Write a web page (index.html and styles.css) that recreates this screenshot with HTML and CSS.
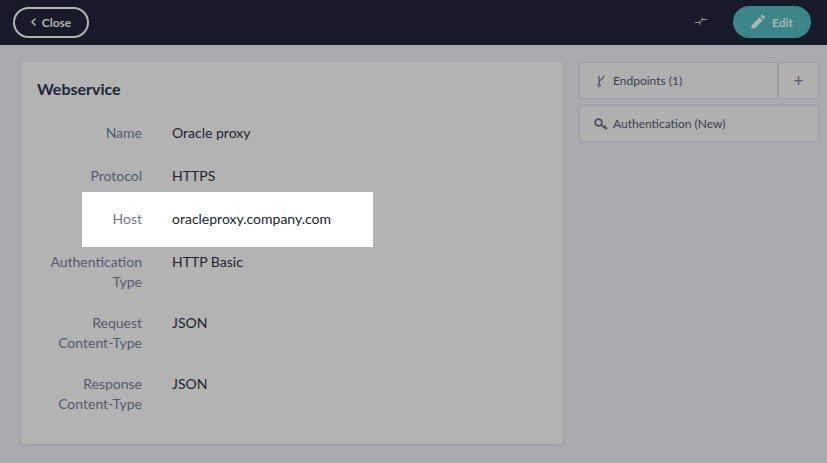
FILE: index.html
```html
<!DOCTYPE html>
<html lang="en">
<head>
  <meta charset="UTF-8" />
  <title>Webservice</title>
  <link rel="stylesheet" href="styles.css">
</head>
<body>
  <header class="topbar">
    <button class="close-btn">
      <svg class="chevron" width="8" height="10" viewBox="0 0 8 10"><path d="M5.5 1.5 2 5l3.5 3.5" fill="none" stroke="currentColor" stroke-width="1.5"/></svg>
      Close
    </button>
    <div class="topbar-right">
      <svg class="compress" width="12" height="8" viewBox="0 0 12 8"><path d="M0 5.5h5M5 3.5v4M7 2.5h5M7 .5v4" fill="none" stroke="currentColor" stroke-width="1.1"/></svg>
      <button class="edit-btn">
        <svg width="14" height="14" viewBox="0 0 14 14"><path d="M0.5 13.5V10.4L8.6 2.3l3.1 3.1-8.1 8.1zM9.6 1.3l1-1a1 1 0 0 1 1.4 0l1.7 1.7a1 1 0 0 1 0 1.4l-1 1z" fill="currentColor"/></svg>
        Edit
      </button>
    </div>
  </header>

  <main class="content">
    <section class="card">
      <h1>Webservice</h1>
      <div class="rows">
        <div class="row"><div class="label">Name</div><div class="value">Oracle proxy</div></div>
        <div class="row"><div class="label">Protocol</div><div class="value">HTTPS</div></div>
        <div class="row spot"><div class="label">Host</div><div class="value">oracleproxy.company.com</div></div>
        <div class="row"><div class="label">Authentication Type</div><div class="value">HTTP Basic</div></div>
        <div class="row"><div class="label">Request Content-Type</div><div class="value">JSON</div></div>
        <div class="row"><div class="label">Response Content-Type</div><div class="value">JSON</div></div>
      </div>
    </section>

    <aside class="side">
      <div class="side-group">
        <div class="side-item grow">
          <svg class="side-icon" width="14" height="14" viewBox="0 0 14 14"><path d="M5 1.5V11M10 1.5C10 5.5 5 5 5 9" fill="none" stroke="currentColor" stroke-width="1.1"/><circle cx="5" cy="11.5" r="1.3" fill="none" stroke="currentColor"/></svg>
          Endpoints (1)
        </div>
        <div class="side-item plus">+</div>
      </div>
      <div class="side-item">
        <svg class="side-icon" width="14" height="13" viewBox="0 0 14 13"><circle cx="4.5" cy="4.5" r="3.4" fill="none" stroke="currentColor" stroke-width="1.7"/><path d="M7 7l5.5 4M10 9.2l1.6-1.6M12 10.8l1-1.2" fill="none" stroke="currentColor" stroke-width="1.6"/></svg>
        Authentication (New)
      </div>
    </aside>
  </main>
</body>
</html>
```

FILE: styles.css
```css
body {
  margin: 0;
  height: 463px;
  overflow: hidden;
  background: #a9abb0;
  font-family: Lato, "Open Sans", sans-serif;
  font-size: 14px;
  line-height: 20px;
  color: #25293a;
}
button {
  font-family: inherit;
  cursor: pointer;
}
.topbar {
  height: 45px;
  background: #171a29;
  display: flex;
  align-items: center;
  justify-content: space-between;
  padding: 0 16px 0 13px;
}
.close-btn {
  width: 76px;
  height: 31px;
  box-sizing: border-box;
  margin-top: -1px;
  border: 2px solid #b3b3b3;
  border-radius: 16px;
  background: none;
  color: #b3b3b3;
  font-size: 12px;
  font-weight: 700;
  display: flex;
  align-items: center;
  justify-content: center;
  gap: 4px;
  padding: 0 1px 0 0;
}
.topbar-right {
  display: flex;
  align-items: center;
  gap: 26px;
}
.compress {
  color: #9a9a9a;
  margin-top: -3px;
}
.edit-btn {
  width: 78px;
  height: 32px;
  margin-top: -1px;
  border: none;
  border-radius: 16px;
  background: #3c8589;
  color: #aab4b5;
  font-size: 12px;
  font-weight: 700;
  display: flex;
  align-items: center;
  justify-content: center;
  gap: 7px;
  padding: 0;
}
.content {
  display: flex;
  align-items: flex-start;
  gap: 16px;
  padding: 17px 8px 0 21px;
}
.card {
  width: 542px;
  height: 382px;
  box-sizing: border-box;
  padding: 16px;
  background: #b3b3b3;
  border-radius: 3px;
  box-shadow: 0 1px 3px rgba(0, 0, 0, 0.12);
}
h1 {
  margin: 0 0 23px;
  font-size: 16px;
  line-height: 22px;
  font-weight: 700;
  color: #20253a;
}
.rows {
  display: flex;
  flex-direction: column;
  gap: 21px;
}
.row {
  display: flex;
  gap: 30px;
  min-height: 22px;
}
.label {
  width: 105px;
  text-align: right;
  color: #555a6e;
}
.value {
  color: #20232f;
}
.spot {
  width: 291px;
  height: 55px;
  box-sizing: border-box;
  padding-bottom: 2px;
  margin: -17px 0 -16px 45px;
  align-items: center;
  background: #fff;
}
.spot .label {
  width: 60px;
  color: #70768d;
}
.side {
  flex: 1;
  display: flex;
  flex-direction: column;
  gap: 6px;
}
.side-group {
  display: flex;
}
.side-item {
  height: 37px;
  box-sizing: border-box;
  display: flex;
  align-items: center;
  gap: 5px;
  padding: 1px 14px 0;
  background: #b0b0b1;
  border: 1px solid #9c9ea3;
  border-radius: 3px;
  font-size: 12px;
  color: #3b3f50;
}
.side-icon {
  color: #4a4d5c;
}
.grow {
  flex: 1;
}
.plus {
  width: 41px;
  padding: 0;
  justify-content: center;
  font-size: 17px;
  color: #555866;
}
```
